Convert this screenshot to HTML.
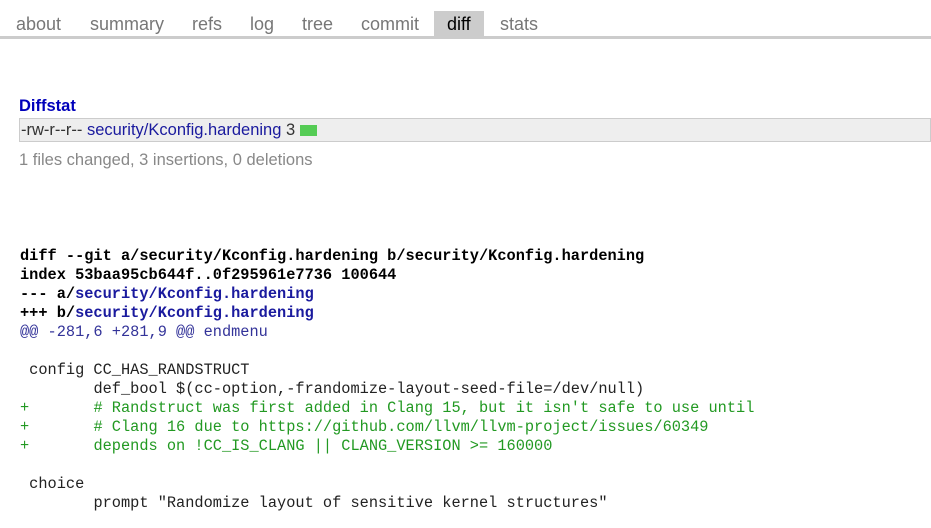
<!DOCTYPE html>
<html><head><style>
body{margin:0;background:#fff;font-family:"Liberation Sans",sans-serif;}
.tabs{position:absolute;left:0;top:0;width:931px;height:36px;border-bottom:3px solid #ccc;}
.tabs span{position:absolute;top:11px;height:25px;font-size:18px;line-height:26px;color:#777;}
.tabs .act{background:#ccc;color:#000;padding:0 13px;}
.h{position:absolute;left:19px;top:97px;font-weight:bold;font-size:16.5px;color:#00b;}
.ds{position:absolute;left:19px;top:118px;width:912px;height:24px;background:#eee;border:1px solid #ccc;box-sizing:border-box;font-size:16.5px;line-height:23px;color:#333;padding-left:1px;}
.ds a{color:#1a1a9e;}
.ds i{display:inline-block;width:17px;height:11px;background:#5c5;vertical-align:-1px;}
.sum{position:absolute;left:19px;top:151px;font-size:16.5px;color:#888;}
pre{position:absolute;left:20px;top:247px;margin:0;font-family:"Liberation Mono",monospace;font-size:15.3px;line-height:19px;color:#222;tab-size:8;}
b{font-weight:bold;color:#000}
.b{color:#1a1a9e}
.g{color:#229922}
.hu{color:#333399}
</style></head><body>
<div class="tabs">
<span style="left:16px">about</span>
<span style="left:90px">summary</span>
<span style="left:192px">refs</span>
<span style="left:250px">log</span>
<span style="left:302px">tree</span>
<span style="left:361px">commit</span>
<span class="act" style="left:434px">diff</span>
<span style="left:500px">stats</span>
</div>
<div class="h">Diffstat</div>
<div class="ds">-rw-r--r-- <a>security/Kconfig.hardening</a> 3 <i></i></div>
<div class="sum">1 files changed, 3 insertions, 0 deletions</div>
<pre><b>diff --git a/security/Kconfig.hardening b/security/Kconfig.hardening
index 53baa95cb644f..0f295961e7736 100644
--- a/<span class="b">security/Kconfig.hardening</span>
+++ b/<span class="b">security/Kconfig.hardening</span></b>
<span class="hu">@@ -281,6 +281,9 @@ endmenu</span>

 config CC_HAS_RANDSTRUCT
 	def_bool $(cc-option,-frandomize-layout-seed-file=/dev/null)
<span class="g">+	# Randstruct was first added in Clang 15, but it isn't safe to use until
+	# Clang 16 due to https://github.com/llvm/llvm-project/issues/60349
+	depends on !CC_IS_CLANG || CLANG_VERSION &gt;= 160000</span>

 choice
 	prompt "Randomize layout of sensitive kernel structures"
</pre>
</body></html>
